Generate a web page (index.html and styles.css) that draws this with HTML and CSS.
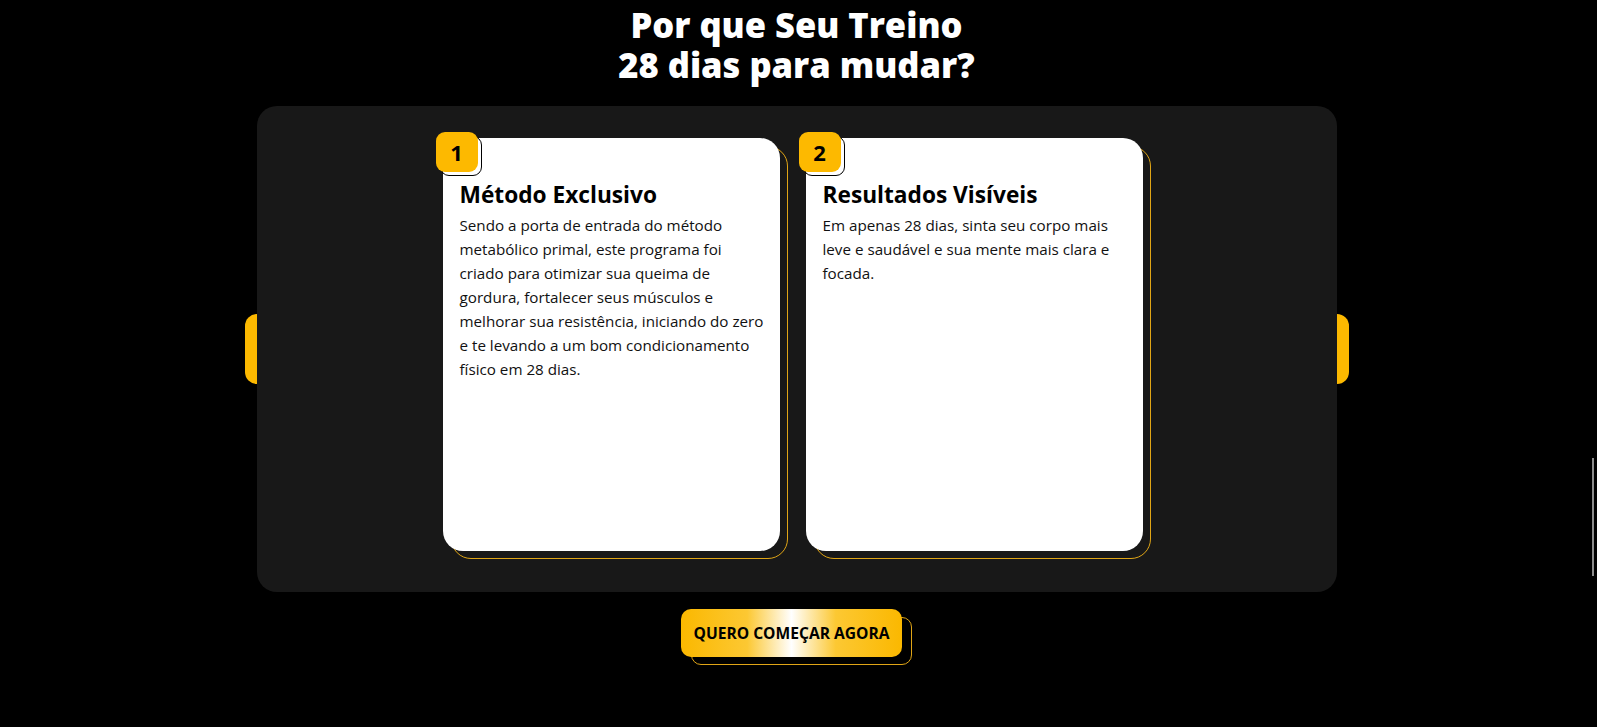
FILE: index.html
```html
<!DOCTYPE html>
<html lang="pt-BR">
<head>
<meta charset="utf-8">
<title>Por que Seu Treino 28 dias para mudar?</title>
<link rel="stylesheet" href="styles.css">
</head>
<body>
<section class="why">
  <h2 class="why-title"><span class="why-line">Por que Seu Treino</span><span class="why-line">28 dias para mudar?</span></h2>
  <div class="panel">
    <button class="nav nav-prev" aria-label="Anterior"></button>
    <div class="cards">
      <article class="card">
        <span class="badge"><span class="badge-face">1</span></span>
        <h3 class="card-title">Método Exclusivo</h3>
        <p class="card-text">Sendo a porta de entrada do método metabólico primal, este programa foi criado para otimizar sua queima de gordura, fortalecer seus músculos e melhorar sua resistência, iniciando do zero e te levando a um bom condicionamento físico em 28 dias.</p>
      </article>
      <article class="card">
        <span class="badge"><span class="badge-face">2</span></span>
        <h3 class="card-title">Resultados Visíveis</h3>
        <p class="card-text">Em apenas 28 dias, sinta seu corpo mais leve e saudável e sua mente mais clara e focada.</p>
      </article>
    </div>
    <button class="nav nav-next" aria-label="Próximo"></button>
  </div>
  <div class="cta-wrap">
    <a class="cta" href="#">QUERO COMEÇAR AGORA</a>
  </div>
</section>
<div class="scroll-thumb"></div>
</body>
</html>
```
FILE: styles.css
```css
html, body {
  margin: 0;
  background: #000;
}
body {
  font-family: "Open Sans", "Noto Sans", sans-serif;
  color: #111;
}
.why {
  display: flex;
  flex-direction: column;
  align-items: center;
  padding-right: 4px;
}
.why-title {
  margin: 0;
  padding-top: 5px;
  display: flex;
  flex-direction: column;
  align-items: center;
  text-align: center;
  color: #fff;
  font-family: "Open Sans", sans-serif;
  font-weight: 800;
  font-size: 34.5px;
  line-height: 40px;
}
.why-line {
  display: block;
}
.panel {
  position: relative;
  z-index: 0;
  box-sizing: border-box;
  width: 1080px;
  margin-top: 21px;
  padding: 32px 0 33px;
  background: #181818;
  border-radius: 20px;
  display: flex;
  justify-content: center;
}
.cards {
  display: flex;
  gap: 26px;
  padding: 0 8px 8px 0;
}
.card {
  position: relative;
  box-sizing: border-box;
  width: 337px;
  height: 413px;
  padding: 43px 14px 0 17px;
  background: #fff;
  border-radius: 20px;
}
.card::before {
  content: "";
  position: absolute;
  top: 8px;
  left: 8px;
  right: -8px;
  bottom: -8px;
  border: 1px solid #e0a516;
  border-radius: 20px;
  z-index: -1;
}
.badge {
  position: absolute;
  top: -2px;
  left: -3px;
  width: 42px;
  height: 40px;
  box-sizing: border-box;
  border: 1px solid #000;
  border-radius: 9px;
}
.badge-face {
  position: absolute;
  top: -5px;
  left: -5px;
  width: 42px;
  height: 40px;
  border-radius: 9px;
  background: #fdb900;
  display: flex;
  align-items: center;
  justify-content: center;
  font-weight: 700;
  font-size: 22px;
  color: #000;
}
.card-title {
  margin: 0;
  font-weight: 700;
  font-size: 22.7px;
  line-height: 28px;
  color: #000;
}
.card-text {
  margin: 4px 0 0;
  font-size: 15.2px;
  line-height: 24px;
  color: #111;
}
.nav {
  position: absolute;
  top: 208px;
  width: 12px;
  height: 70px;
  padding: 0;
  border: 0;
  background: #fdb900;
}
.nav-prev {
  left: -12px;
  border-radius: 12px 0 0 12px;
}
.nav-next {
  right: -12px;
  border-radius: 0 12px 12px 0;
}
.cta-wrap {
  position: relative;
  z-index: 0;
  margin-top: 17px;
  padding: 0 10px 8px 0;
}
.cta {
  position: relative;
  display: flex;
  align-items: center;
  justify-content: center;
  width: 221px;
  height: 48px;
  box-sizing: border-box;
  border-radius: 10px;
  background: linear-gradient(90deg, #fbb800 0%, #fcc833 30%, #fff 50%, #fcc833 70%, #fbb800 100%);
  color: #000;
  text-decoration: none;
  font-weight: 700;
  font-size: 15.6px;
}
.cta::before {
  content: "";
  position: absolute;
  top: 8px;
  left: 10px;
  right: -10px;
  bottom: -8px;
  border: 1px solid #e0a516;
  border-radius: 10px;
  z-index: -1;
}
.scroll-thumb {
  position: fixed;
  top: 458px;
  right: 3px;
  width: 2px;
  height: 118px;
  background: #8c8c8c;
}
```
